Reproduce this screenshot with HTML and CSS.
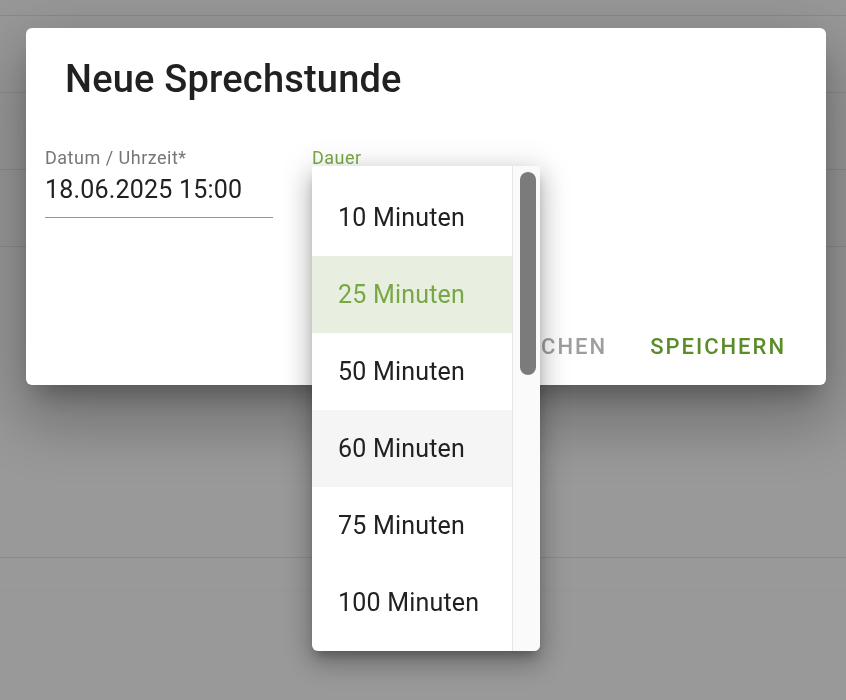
FILE: index.html
```html
<!DOCTYPE html>
<html lang="de">
<head>
    <meta charset="UTF-8">
    <meta name="viewport" content="width=device-width, initial-scale=1.0">
    <title>Neue Sprechstunde</title>
    <link rel="stylesheet" href="styles.css">
</head>
<body>

    <div class="page">
        <div class="row row-a"></div>
        <div class="row row-b"></div>
        <div class="row row-b"></div>
        <div class="row row-b"></div>
        <div class="row row-c"></div>
        <div class="row row-d"></div>
    </div>

    <div class="dialog">
        <h1 class="dialog-title">Neue Sprechstunde</h1>

        <div class="fields">
            <div class="field">
                <label class="field-label">Datum / Uhrzeit*</label>
                <div class="field-value">18.06.2025 15:00</div>
            </div>
            <div class="field field-open">
                <label class="field-label">Dauer</label>
            </div>
        </div>

        <div class="actions">
            <button class="btn btn-cancel">Abbrechen</button>
            <button class="btn btn-save">Speichern</button>
        </div>
    </div>

    <div class="menu">
        <ul class="menu-list">
            <li class="menu-item">10 Minuten</li>
            <li class="menu-item selected">25 Minuten</li>
            <li class="menu-item">50 Minuten</li>
            <li class="menu-item hover">60 Minuten</li>
            <li class="menu-item">75 Minuten</li>
            <li class="menu-item">100 Minuten</li>
        </ul>
        <div class="scrollbar">
            <div class="thumb"></div>
        </div>
    </div>

</body>
</html>
```

FILE: styles.css
```css
body {
    margin: 0;
    font-family: Roboto, "Noto Sans", Arial, sans-serif;
    background-color: #999999;
    color: #212121;
    height: 700px;
    overflow: hidden;
}

.page {
    display: flex;
    flex-direction: column;
}

.row {
    border-bottom: 1px solid #8b8b8b;
}

.row-a { height: 15px; }
.row-b { height: 76px; }
.row-c { height: 310px; }
.row-d { height: 32px; border-bottom-color: #959595; }

.dialog {
    position: fixed;
    left: 26px;
    top: 28px;
    width: 800px;
    height: 357px;
    box-sizing: border-box;
    background-color: #fff;
    border-radius: 6px;
    padding: 28px 40px 25px 19px;
    display: flex;
    flex-direction: column;
    box-shadow: 0 17px 24px -11px rgba(0, 0, 0, 0.3),
                0 38px 60px 5px rgba(0, 0, 0, 0.16),
                0 14px 72px 13px rgba(0, 0, 0, 0.14);
}

.dialog-title {
    margin: 0 0 0 20px;
    font-size: 38px;
    line-height: 46px;
    font-weight: 500;
    letter-spacing: 0.2px;
    color: #212121;
}

.fields {
    display: flex;
    gap: 39px;
    margin-top: 46px;
}

.field {
    width: 228px;
}

.field-label {
    display: block;
    font-size: 18px;
    line-height: 20px;
    letter-spacing: 0.5px;
    color: #767676;
}

.field-value {
    margin-top: 7px;
    font-size: 25px;
    line-height: 30px;
    letter-spacing: 0.2px;
    padding-bottom: 12px;
    border-bottom: 1px solid #949494;
}

.field-open .field-label {
    color: #78a844;
}

.actions {
    margin-top: auto;
    display: flex;
    justify-content: flex-end;
    gap: 43px;
}

.btn {
    border: none;
    background: none;
    padding: 0;
    font-family: inherit;
    font-size: 22px;
    line-height: 26px;
    font-weight: 500;
    letter-spacing: 2px;
    text-transform: uppercase;
    cursor: pointer;
}

.btn-cancel {
    color: #9e9e9e;
}

.btn-save {
    color: #5b8c2a;
}

.menu {
    position: absolute;
    left: 312px;
    top: 166px;
    width: 228px;
    height: 485px;
    display: flex;
    background-color: #fff;
    border-radius: 2px 2px 6px 6px;
    overflow: hidden;
    box-shadow: 0 8px 12px -4px rgba(0, 0, 0, 0.3),
                0 12px 26px 3px rgba(0, 0, 0, 0.18),
                0 4px 30px 6px rgba(0, 0, 0, 0.1);
}

.menu-list {
    list-style: none;
    margin: 0;
    padding: 13px 0 0;
    flex: 1;
}

.menu-item {
    height: 77px;
    display: flex;
    align-items: center;
    padding-left: 26px;
    font-size: 25px;
    letter-spacing: 0.2px;
    color: #212121;
}

.menu-item.selected {
    background-color: #e8eee0;
    color: #78a844;
}

.menu-item.hover {
    background-color: #f5f5f5;
}

.scrollbar {
    width: 28px;
    background-color: #fafafa;
    border-left: 1px solid #e6e6e6;
    padding: 6px 0 0 7px;
    box-sizing: border-box;
}

.thumb {
    width: 16px;
    height: 203px;
    border-radius: 8px;
    background-color: #7b7b7b;
}
```
